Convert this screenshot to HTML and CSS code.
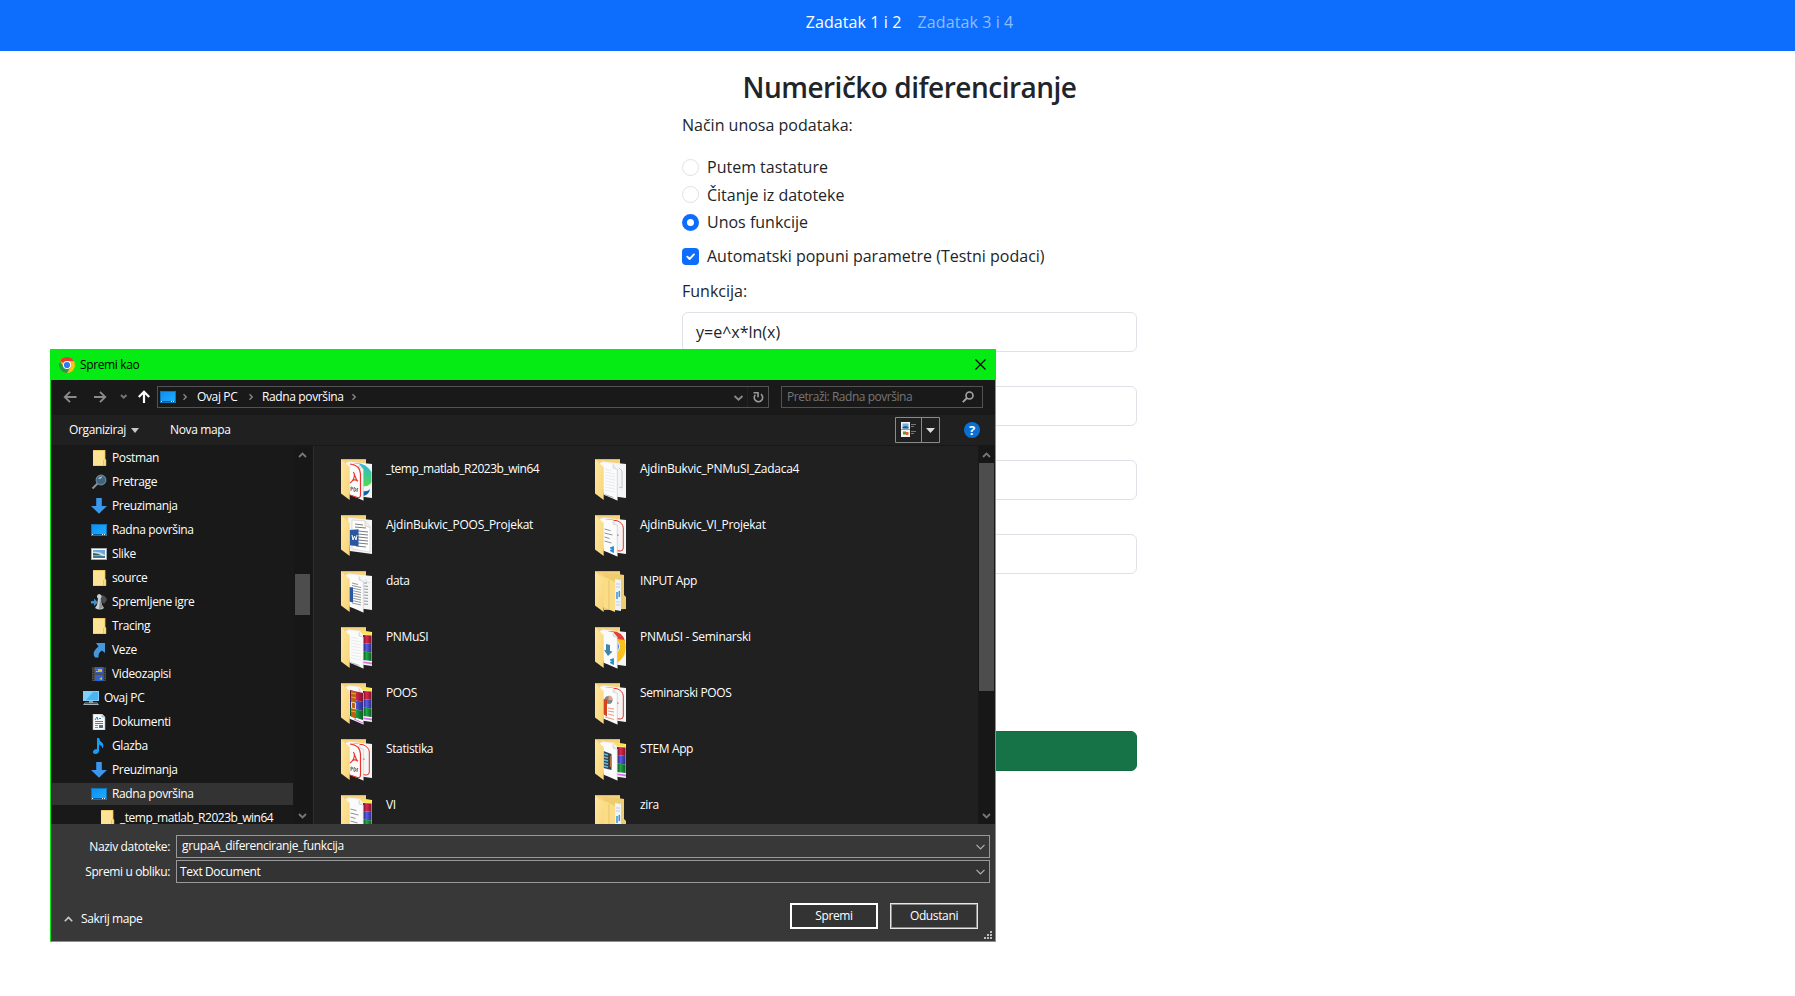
FILE: index.html
```html
<!DOCTYPE html>
<html lang="bs">
<head>
<meta charset="utf-8">
<title>Numeričko diferenciranje</title>
<link rel="stylesheet" href="styles.css">
</head>
<body>
<svg class="defs" width="0" height="0" aria-hidden="true">
  <defs>
    <linearGradient id="gFlap" x1="0" y1="0" x2="1" y2="1"><stop offset="0" stop-color="#ffe7a2"/><stop offset="1" stop-color="#f8d477"/></linearGradient>
    <linearGradient id="gDesk" x1="0" y1="0" x2="1" y2="1"><stop offset="0" stop-color="#0b8df5"/><stop offset="1" stop-color="#1fb0ff"/></linearGradient>
    <linearGradient id="gEdge" x1="0" y1="0" x2="0" y2="1"><stop offset="0" stop-color="#28b9d8"/><stop offset="1" stop-color="#55d84e"/></linearGradient>
    <linearGradient id="gRed"><stop offset="0" stop-color="#6d0d22"/><stop offset=".4" stop-color="#d42a52"/><stop offset="1" stop-color="#85122c"/></linearGradient>
    <linearGradient id="gBlue"><stop offset="0" stop-color="#20206c"/><stop offset=".4" stop-color="#5a5de0"/><stop offset="1" stop-color="#2a2a86"/></linearGradient>
    <linearGradient id="gGreen"><stop offset="0" stop-color="#064d1c"/><stop offset=".4" stop-color="#22a845"/><stop offset="1" stop-color="#0a5c24"/></linearGradient>
  </defs>
  <symbol id="folder" viewBox="0 0 16 16"><path d="M2 0h12v9l1 .6V16H2z" fill="#ffe394"/><path d="M2 .4h12M14 0v9l.8.8V15.700H2.400" fill="none" stroke="#e9bf4f" stroke-width=".8"/><path d="M12.600 15.500V10.500l1-1" fill="none" stroke="#e2b545" stroke-width=".8"/></symbol>
  <symbol id="lens" viewBox="0 0 16 16"><path d="M1.500 14.500 7 9" stroke="#8b959c" stroke-width="2"/><circle cx="10" cy="6" r="4.900" fill="#3e6681" stroke="#718897" stroke-width="1.100"/><path d="M7 5q1.500-3 4.500-2.500Q10 5.500 7 5z" fill="#a7c9de"/></symbol>
  <symbol id="down" viewBox="0 0 16 16"><path d="M5.200 0h5.600v8H16l-8 7.800L0 8h5.200z" fill="#3a97ec"/></symbol>
  <symbol id="desk" viewBox="0 0 16 16"><path d="M0 2h16v12H0z" fill="url(#gDesk)"/><path d="M.5 2.500h15v11H.5z" fill="none" stroke="#1274b8"/><path d="M1 12.500h14" stroke="#075a9c"/><path d="M1 12.500h1M11 12.500h1M13 12.500h1" stroke="#fff"/></symbol>
  <symbol id="pics" viewBox="0 0 16 16"><path d="M0 2h16v12H0z" fill="#a8a8a8"/><path d="M1 3h14v10H1z" fill="#fff"/><path d="M2 4h12v8H2z" fill="#6ba6dc"/><path d="M2 6q6-1 12 3v2H2z" fill="#c8e3ee"/><path d="M2 7q5 0 9 2.500H2z" fill="#2d6254"/><path d="M2 10h12v2H2z" fill="#48758e"/></symbol>
  <symbol id="games" viewBox="0 0 16 16"><path d="M9 1q6 0 7 5l-3 4-4-4z" fill="#4b4d51"/><path d="M8 0a2.500 2.500 0 0 1 1.500 4.500L11 11l2 3q-4 3-9 0l2-3 1-6.500A2.500 2.500 0 0 1 8 0z" fill="#cbd1d2"/><path d="M9 5l2 6 1 3-4 1z" fill="#8d9798"/><path d="M0 7h3V4.500L7 8.500 3 12V9.500H0z" fill="#3b91cc"/></symbol>
  <symbol id="link" viewBox="0 0 16 16"><path d="M5 1h9v10l-3-2.500q-4 2-3.500 7H4Q0 10 7.500 4.500z" fill="#4598dc"/></symbol>
  <symbol id="video" viewBox="0 0 16 16"><path d="M1 1h14v14H1z" fill="#4f4f4f"/><path d="M2.200 1v14M13.800 1v14" stroke="#151515" stroke-dasharray="1.200 1.200"/><path d="M4 1h8v6H4z" fill="#385cbb"/><path d="M4 9h8v6H4z" fill="#2c63cd"/><path d="M5 5h2V3h4v3H5zM8 13l3-2v3z" fill="#d8b72c"/><path d="M4 3h3v1H4z" fill="#af5a8a"/></symbol>
  <symbol id="pc" viewBox="0 0 16 16"><path d="M0 1h16v10H0z" fill="#83cdf6"/><path d="M1 2h14v8H1z" fill="#48b5f5"/><path d="M1 2h9L3 10H1z" fill="#81d0fb"/><path d="M6 11h4v2H6z" fill="#8a979e"/><path d="M2 12.500h12l2 2.500H0z" fill="#a6b4bc"/><path d="M2 13.500h12" stroke="#27343b" stroke-width=".7"/></symbol>
  <symbol id="doc" viewBox="0 0 16 16"><path d="M2 0h9l3 3v13H2z" fill="#fafafa" stroke="#aaa" stroke-width=".6"/><path d="M11 0v3h3" fill="#ddd" stroke="#999" stroke-width=".6"/><path d="M4 6l2-3 1 3M8 4.500h2M4 7.500h8M4 9.500h8" stroke="#2a87c8" fill="none"/><path d="M4 11.500h3M4 13.500h3" stroke="#888"/><path d="M8 11h4v3H8z" fill="#3f7592"/></symbol>
  <symbol id="note" viewBox="0 0 16 16"><path d="M6 0h2q.5 3 3 4.500 2.500 2.500.5 6-.3-3-3.500-4V13q-.5 3-3.500 3-3 0-2.500-2.700Q3 11 6 11z" fill="#10a0fa"/></symbol>

  <symbol id="back" viewBox="0 0 32 42"><path d="M0 0h25v30H0z" fill="#f6d27c"/><path d="M0 .5h25" stroke="#dfb65a"/></symbol>
  <symbol id="flap" viewBox="0 0 32 42"><path d="M0 .5 8.700 8v33L0 34.500z" fill="url(#gFlap)"/></symbol>
  <symbol id="page2" viewBox="0 0 32 42"><path d="M7 2.500 31 5v34L9 36z" fill="#f4f5f6"/></symbol>
  <symbol id="page1" viewBox="0 0 32 42"><path d="M5 3.500 18 5l4.300 5v31.500L8.500 35.500z" fill="#fbfbfb"/><path d="M22.300 10v31.500" stroke="#bfc3c5" stroke-width=".6"/><path d="M18 5v4l4.300 1.500" fill="#e6e6e6" stroke="#c6c6c6" stroke-width=".5"/></symbol>
  <symbol id="pdfBack" viewBox="0 0 32 42"><path d="M10 4.500l12 1.200Q28 8 28.300 13v20q0 3-3 3L15 35" fill="none" stroke="#e93328" stroke-width="1"/><path d="M22 19l2 1-2 1.500" fill="#e93328"/></symbol>
  <symbol id="pdfFront" viewBox="0 0 32 42"><path d="M9 5q10 1 10.500 10v21q0 3-3 2.500L9 36" fill="none" stroke="#e93328" stroke-width="1.200"/><path d="M12.500 13q2 6 4 9.500M13.500 15q0 6-4.500 9M11 21.500q3-1.500 6 .5" fill="none" stroke="#e93328" stroke-width="1.100"/><path d="M10 28v4M10 28q2 0 1.800 1.800H10M13 28.500v4q2 0 1.800-2-.2-2-1.800-2M16 33v-3.500h1.200M16 31h1" fill="none" stroke="#444" stroke-width=".7"/></symbol>
  <symbol id="lines1" viewBox="0 0 32 42"><path d="M11 12l6 1.500M11 14.500l9 2M11 17l9 2M11 19.500l9 2M11 22l9 2M11 24.500l9 2M11 27l9 2M11 29.500l9 2M11 32l9 2" stroke="#7c8084" stroke-width=".8"/></symbol>
  <symbol id="faint1" viewBox="0 0 32 42"><path d="M10 10l7 1.500M10 13l10 2M10 16l10 2M10 19l10 2M10 22l10 2M10 25l10 2M10 28l10 2M10 31l10 2" stroke="#e9ebed" stroke-width="1.200"/><path d="M9.500 35.500l9 3" stroke="#9a9a9a" stroke-width=".7"/></symbol>
  <symbol id="lines2" viewBox="0 0 32 42"><path d="M23 12h3M23 15l4 .4M23 18l4 .4M23 21l4 .4M23 24l4 .4M23 27l4 .4M23 30l4 .4M23 33l4 .4" stroke="#7c8084" stroke-width=".8"/><path d="M24 8l2 3 3 1" fill="none" stroke="#ccc" stroke-width=".6"/></symbol>
  <symbol id="rar2" viewBox="0 0 32 42"><path d="M18 3.500 30 5l1 3-9-.5z" fill="#ffe34d"/><path d="M22 8l8.600.5v8.500l-8.600-1z" fill="url(#gRed)"/><path d="M22 16l8.600 1v8.500l-8.600-1z" fill="url(#gBlue)"/><path d="M22 24.500l8.600 1V34L22 33z" fill="url(#gGreen)"/><path d="M22 34.500l9 1v2l-9-1.500z" fill="#e26bea"/></symbol>
  <symbol id="rar1" viewBox="0 0 32 42"><path d="M9 7l13 3v9L9 16z" fill="url(#gRed)"/><path d="M9 16l13 3v9L9 25z" fill="url(#gBlue)"/><path d="M9 25l13 3v9L9 33z" fill="url(#gGreen)"/><path d="M10 7.500l5 1.200v27L10 33.500z" fill="#b8630f"/><path d="M10 10l5 1M10 14l5 1M10 28l5 1" stroke="#f3a82b"/><path d="M10.500 19l4 1v6l-4-1z" fill="none" stroke="#f4d9aa" stroke-width="1"/><path d="M13 36l9 4" stroke="#e26bea"/></symbol>
  <symbol id="vs" viewBox="0 0 32 42"><path d="M18.500 31.500v6l-3.500-2 3-1.500-3-1z" fill="#1d87cf" stroke="#1d87cf" stroke-width=".8"/></symbol>
  <symbol id="few" viewBox="0 0 32 42"><path d="M9.500 14l6 1.700M9.500 18l8 2M9.500 22l5 1.500M9.500 26l7 2" stroke="#8e9296" stroke-width="1"/></symbol>
  <symbol id="inner" viewBox="0 0 32 42"><path d="M8.700 2 26 3.500 29 4v20l2 2v12l-22 1z" fill="#f0cc70"/><path d="M20 8l6 1v31l-6-1z" fill="#eef3f7"/><path d="M21 13h4M21 16h4M21 31h4M21 34h4" stroke="#b5c3cc" stroke-width=".8"/><path d="M22 21v7M24.300 20v6" stroke="#3a94d6" stroke-width="1.500"/><path d="M5 4l15 7v30L5 35z" fill="#fbdd87"/><path d="M14 9v29" stroke="#efcd79" stroke-width="1.600"/></symbol>
</svg>

<header class="topbar">
  <a class="active">Zadatak 1 i 2</a>
  <a>Zadatak 3 i 4</a>
</header>

<main class="form">
  <h1>Numeričko diferenciranje</h1>
  <p class="lead"><span>Način unosa podataka:</span></p>
  <div class="check"><i class="radio"></i><span>Putem tastature</span></div>
  <div class="check"><i class="radio"></i><span>Čitanje iz datoteke</span></div>
  <div class="check"><i class="radio on"></i><span>Unos funkcije</span></div>
  <div class="check auto"><svg class="box" viewBox="0 0 17 17"><rect width="17" height="17" rx="4" fill="#0d6efd"/><path d="M5.300 8.700l2.300 2.300 4.300-4.600" fill="none" stroke="#fff" stroke-width="1.900" stroke-linecap="round" stroke-linejoin="round"/></svg><span>Automatski popuni parametre (Testni podaci)</span></div>
  <label class="fn">Funkcija:</label>
  <div class="inputs">
    <div class="field">y=e^x*ln(x)</div>
    <div class="field"></div>
    <div class="field"></div>
    <div class="field"></div>
  </div>
  <div class="submit"></div>
</main>

<section class="dialog">
  <div class="title">
    <svg class="chrome" viewBox="0 0 16 16"><circle cx="8" cy="8" r="8" fill="#fbc116"/><path d="M8 8 1.070 4A8 8 0 0 1 14.930 4H8z" fill="#e33b2e"/><path d="M8 8 4.540 10 1.070 4A8 8 0 0 0 8 16l3.460-6z" fill="#249a4b"/><circle cx="8" cy="8" r="4" fill="#fff"/><circle cx="8" cy="8" r="3.100" fill="#2d7bf0"/></svg>
    <span>Spremi kao</span>
    <svg class="close" viewBox="0 0 11 11"><path d="M.5.5l10 10M10.500.5l-10 10" stroke="#000" stroke-width="1.100"/></svg>
  </div>
  <div class="navrow">
    <svg class="arrows" viewBox="0 0 100 20"><g fill="none" stroke="#8b8b8b" stroke-width="1.900"><path d="M13.500 10H2M7 4.800 1.800 10 7 15.200"/><path d="M31 10h11.500M37 4.800l5.200 5.200-5.200 5.200"/><path d="M58 8l2.700 2.700L63.500 8" stroke="#777"/><path d="M81 16V5M75.800 10 81 4.800 86.200 10" stroke="#fff" stroke-width="2.200"/></g></svg>
    <div class="address">
      <svg class="i16"><use href="#desk"/></svg>
      <svg class="sep" viewBox="0 0 6 8"><path d="M1.500 1.200 4.300 4 1.500 6.800" fill="none" stroke="#8a8a8a" stroke-width="1.300"/></svg>
      <span class="a1">Ovaj PC</span>
      <svg class="sep" viewBox="0 0 6 8"><path d="M1.500 1.200 4.300 4 1.500 6.800" fill="none" stroke="#8a8a8a" stroke-width="1.300"/></svg>
      <span class="a2">Radna površina</span>
      <svg class="sep" viewBox="0 0 6 8"><path d="M1.500 1.200 4.300 4 1.500 6.800" fill="none" stroke="#8a8a8a" stroke-width="1.300"/></svg>
      <svg class="addr-end" viewBox="0 0 36 20"><path d="M2.500 9l4 3.700L10.500 9" fill="none" stroke="#8a8a8a" stroke-width="1.800"/><path d="M15.500 0v20" stroke="#222"/><path d="M29 7.200A4.200 4.200 0 1 1 23.300 7.700M21.500 5.800h4.500v4.500" fill="none" stroke="#9a9a9a" stroke-width="1.600"/></svg>
    </div>
    <div class="search"><span>Pretraži: Radna površina</span><svg viewBox="0 0 12 12"><circle cx="7.500" cy="4.500" r="3.500" fill="none" stroke="#a5a5a5" stroke-width="1.600"/><path d="M5 7 .8 11.200" stroke="#a5a5a5" stroke-width="1.800"/></svg></div>
  </div>
  <div class="tools">
    <span class="org">Organiziraj</span><i class="tri"></i><span class="newf">Nova mapa</span>
    <svg class="view" viewBox="0 0 45 26"><path d="M.5.500h44v25H.5zM26.500 0v26" fill="none" stroke="#8a8a8a"/><path d="M6 5h9v15H6z" fill="#f4f4f4"/><path d="M7.500 6.500h6v5h-6z" fill="#71ade9"/><path d="M7.500 10l3-1 3 1v1.500h-6z" fill="#235f72"/><path d="M6 12.500h9" stroke="#999"/><path d="M8 14.500h3v3H8z" fill="#4f9c3c"/><path d="M11 15h2.500v3H11z" fill="#e0662a"/><path d="M16 7.500h5M16 9.500h3M16 14.500h5M16 16.500h3" stroke="#777"/><path d="M31 11h9l-4.500 5z" fill="#ddd"/></svg>
    <b class="help">?</b>
  </div>
  <div class="body">
    <nav class="tree">
      <div class="node"><svg class="i16"><use href="#folder"/></svg><span>Postman</span></div>
      <div class="node"><svg class="i16"><use href="#lens"/></svg><span>Pretrage</span></div>
      <div class="node"><svg class="i16"><use href="#down"/></svg><span>Preuzimanja</span></div>
      <div class="node"><svg class="i16"><use href="#desk"/></svg><span>Radna površina</span></div>
      <div class="node"><svg class="i16"><use href="#pics"/></svg><span>Slike</span></div>
      <div class="node"><svg class="i16"><use href="#folder"/></svg><span>source</span></div>
      <div class="node"><svg class="i16"><use href="#games"/></svg><span>Spremljene igre</span></div>
      <div class="node"><svg class="i16"><use href="#folder"/></svg><span>Tracing</span></div>
      <div class="node"><svg class="i16"><use href="#link"/></svg><span>Veze</span></div>
      <div class="node"><svg class="i16"><use href="#video"/></svg><span>Videozapisi</span></div>
      <div class="node up"><svg class="i16"><use href="#pc"/></svg><span>Ovaj PC</span></div>
      <div class="node"><svg class="i16"><use href="#doc"/></svg><span>Dokumenti</span></div>
      <div class="node"><svg class="i16"><use href="#note"/></svg><span>Glazba</span></div>
      <div class="node"><svg class="i16"><use href="#down"/></svg><span>Preuzimanja</span></div>
      <div class="node sel"><svg class="i16"><use href="#desk"/></svg><span>Radna površina</span></div>
      <div class="node deep"><svg class="i16"><use href="#folder"/></svg><span class="tight">_temp_matlab_R2023b_win64</span></div>
    </nav>
    <div class="scroll left">
      <svg viewBox="0 0 9 6"><path d="M1 5l3.500-3.500L8 5" fill="none" stroke="#777" stroke-width="1.800"/></svg>
      <i class="thumb"></i>
      <svg viewBox="0 0 9 6"><path d="M1 1l3.500 3.500L8 1" fill="none" stroke="#777" stroke-width="1.800"/></svg>
    </div>
    <div class="files">
      <div class="file"><svg class="big" viewBox="0 0 32 42"><use href="#back"/><use href="#page2"/><path d="M12 4.500q12-2 18.500 8.500v10q-2 5-9 4z" fill="url(#gEdge)"/><path d="M21 32q6 1 8-2-1 6-7 7z" fill="#1561a9"/><use href="#page1"/><use href="#pdfFront"/><use href="#flap"/></svg><span class="tight">_temp_matlab_R2023b_win64</span></div>
      <div class="file"><svg class="big" viewBox="0 0 32 42"><use href="#back"/><use href="#page2"/><path d="M11 5l13 1 5 6v25l-18-3z" fill="#fff" stroke="#c8c8c8" stroke-width=".6"/><path d="M24 6v5l5 1.500" fill="#eee" stroke="#d0c48c" stroke-width=".6"/><path d="M14 9l8 1M14 12l11 1M17 16l10 1M17 19l10 1M17 22l10 1M17 25l10 1M17 28l10 1M15 31l10 1" stroke="#666c72" stroke-width=".9"/><path d="M8.500 15l9-.8v17l-9-1z" fill="#2857a4"/><path d="M11 20l1 5 1.500-4 1.500 4 1-5" fill="none" stroke="#fff" stroke-width="1"/><use href="#flap"/></svg><span class="loose">AjdinBukvic_POOS_Projekat</span></div>
      <div class="file"><svg class="big" viewBox="0 0 32 42"><use href="#back"/><use href="#page2"/><use href="#lines2"/><use href="#page1"/><use href="#lines1"/><path d="M8 16l4 .5v15l-4-1z" fill="#2857a4"/><use href="#flap"/></svg><span>data</span></div>
      <div class="file"><svg class="big" viewBox="0 0 32 42"><use href="#back"/><use href="#page2"/><use href="#rar2"/><use href="#page1"/><use href="#faint1"/><use href="#flap"/></svg><span>PNMuSI</span></div>
      <div class="file"><svg class="big" viewBox="0 0 32 42"><use href="#back"/><use href="#page2"/><use href="#rar2"/><use href="#page1"/><use href="#rar1"/><use href="#flap"/></svg><span>POOS</span></div>
      <div class="file"><svg class="big" viewBox="0 0 32 42"><use href="#back"/><use href="#page2"/><use href="#pdfBack"/><use href="#page1"/><use href="#pdfFront"/><use href="#flap"/></svg><span>Statistika</span></div>
      <div class="file"><svg class="big" viewBox="0 0 32 42"><use href="#back"/><use href="#page2"/><use href="#rar2"/><use href="#page1"/><use href="#few"/><use href="#flap"/></svg><span>VI</span></div>

      <div class="file"><svg class="big" viewBox="0 0 32 42"><use href="#back"/><use href="#page2"/><path d="M24 9l3 3v17l-3-1" fill="none" stroke="#b9bdc0" stroke-width=".8"/><use href="#page1"/><use href="#faint1"/><use href="#flap"/></svg><span class="loose">AjdinBukvic_PNMuSI_Zadaca4</span></div>
      <div class="file"><svg class="big" viewBox="0 0 32 42"><use href="#back"/><use href="#page2"/><use href="#pdfBack"/><use href="#page1"/><use href="#few"/><use href="#vs"/><use href="#flap"/></svg><span class="loose">AjdinBukvic_VI_Projekat</span></div>
      <div class="file"><svg class="big" viewBox="0 0 32 42"><use href="#back"/><use href="#inner"/><use href="#flap"/></svg><span>INPUT App</span></div>
      <div class="file"><svg class="big" viewBox="0 0 32 42"><use href="#back"/><use href="#page2"/><path d="M13 4.500q14-2 17 9.500l-8 1z" fill="#e24033"/><path d="M22 12l7.500 1q4.500 15-7.500 23z" fill="#fbc21d"/><path d="M22 14q5 5.500 0 11z" fill="#3f80e8" stroke="#fff"/><use href="#page1"/><path d="M11 17l4 1v6l2.500.5L13 29l-4-6 2 .300z" fill="#3f86ad"/><use href="#vs"/><use href="#flap"/></svg><span class="loose">PNMuSI - Seminarski</span></div>
      <div class="file"><svg class="big" viewBox="0 0 32 42"><use href="#back"/><use href="#page2"/><use href="#pdfBack"/><use href="#page1"/><circle cx="13.500" cy="17" r="4" fill="#858585"/><path d="M13.500 17v-4.500a4 4 0 0 1 4 4.500z" fill="#eca184"/><path d="M8 16l4 .5v17L8 31z" fill="#d2431f"/><path d="M13 25l6 1M13 28l6 1M13 31l6 1.500M10 34l9 2.500" stroke="#e79b81" stroke-width="1"/><use href="#flap"/></svg><span>Seminarski POOS</span></div>
      <div class="file"><svg class="big" viewBox="0 0 32 42"><use href="#back"/><use href="#page2"/><use href="#rar2"/><use href="#page1"/><path d="M8.500 12l8 3v16l-8-2z" fill="#34434d"/><path d="M9 15l4 1M9 18l4 1M9 21l4 1M9 24l4 1M9 27l4 1" stroke="#6bb7d8" stroke-width="1.300"/><path d="M15 17l1.500.5v11L15 28z" fill="#b5763c"/><use href="#flap"/></svg><span>STEM App</span></div>
      <div class="file"><svg class="big" viewBox="0 0 32 42"><use href="#back"/><use href="#inner"/><use href="#flap"/></svg><span>zira</span></div>
    </div>
    <div class="scroll right">
      <svg viewBox="0 0 9 6"><path d="M1 5l3.500-3.500L8 5" fill="none" stroke="#777" stroke-width="1.800"/></svg>
      <i class="thumb"></i>
      <svg viewBox="0 0 9 6"><path d="M1 1l3.500 3.500L8 1" fill="none" stroke="#777" stroke-width="1.800"/></svg>
    </div>
  </div>
  <div class="foot">
    <div class="line"><label>Naziv datoteke:</label><div class="combo name"><span>grupaA_diferenciranje_funkcija</span><svg viewBox="0 0 9 6"><path d="M.5.800l4 4 4-4" fill="none" stroke="#b0b0b0" stroke-width="1.200"/></svg></div></div>
    <div class="line"><label>Spremi u obliku:</label><div class="combo type"><span>Text Document</span><svg viewBox="0 0 9 6"><path d="M.5.800l4 4 4-4" fill="none" stroke="#b0b0b0" stroke-width="1.200"/></svg></div></div>
    <div class="actions">
      <svg class="caret" viewBox="0 0 9 6"><path d="M.8 5.200 4.500 1.500 8.200 5.200" fill="none" stroke="#ccc" stroke-width="1.600"/></svg>
      <span class="hide">Sakrij mape</span>
      <div class="btn primary">Spremi</div>
      <div class="btn">Odustani</div>
    </div>
    <svg class="grip" viewBox="0 0 8 8"><path d="M6 0h2v2H6zM3 3h2v2H3zM6 3h2v2H6zM0 6h2v2H0zM3 6h2v2H3zM6 6h2v2H6z" fill="#bdbdbd"/></svg>
  </div>
</section>
</body>
</html>
```
FILE: styles.css
```css
* { box-sizing: border-box; }
body {
  margin: 0;
  height: 996px;
  overflow: hidden;
  position: relative;
  background: #fff;
  color: #212529;
  font: 400 16px/24px "Open Sans", "Noto Sans", sans-serif;
  letter-spacing: 0;
}
svg { display: block; flex: none; }
span, label, a { white-space: nowrap; }
.defs { position: absolute; }

.topbar {
  height: 51px;
  background: #0d6efd;
  display: flex;
  justify-content: center;
  gap: 16px;
  padding: 10px 0 0 24px;
  color: #fff;
  letter-spacing: 0.1px;
}
.topbar a:not(.active) { color: #8fbcff; }

.form { width: 455px; margin-left: 682px; }
h1 {
  margin: 19px 0 0;
  font-size: 28px;
  line-height: 34px;
  font-weight: 600;
  text-align: center;
  letter-spacing: -0.5px;
}
.lead { margin: 9px 0 18px; }
.check { display: flex; align-items: center; gap: 8px; height: 24px; margin-bottom: 3.500px; }
.radio { width: 17px; height: 17px; border: 1px solid #dee2e6; border-radius: 50%; }
.radio.on { border: 5px solid #0d6efd; }
.auto { margin-top: 10px; }
.box { width: 17px; height: 17px; }
.fn { display: block; margin-top: 11px; }
.inputs { display: flex; flex-direction: column; gap: 34px; margin-top: 9px; }
.field { height: 40px; border: 1px solid #dee2e6; border-radius: 6px; padding: 7px 13px; }
.submit { height: 40px; margin-top: 157px; background: #157347; border: 1px solid #146c43; border-radius: 6px; }

.dialog {
  position: absolute;
  left: 50px;
  top: 349px;
  width: 946px;
  height: 593px;
  border: 1px solid #04ec14;
  background: #202020;
  color: #fff;
  font-size: 12px;
  line-height: 16px;
  letter-spacing: -0.37px;
  display: flex;
  flex-direction: column;
}
.title { height: 30px; background: #04ec14; color: #000; display: flex; align-items: center; padding: 0 9px 1px 8px; gap: 5px; }
.title span { padding-top: 1px; }
.chrome { width: 16px; height: 16px; }
.close { width: 11px; height: 11px; margin-left: auto; }
.navrow { height: 35px; background: #191919; display: flex; align-items: center; padding: 0 12px 1px 0; }
.arrows { width: 100px; height: 20px; margin: 0 -6px 0 12px; }
.address { width: 612px; height: 22px; border: 1px solid #535353; display: flex; align-items: center; padding: 0 0 0 2px; }
.i16 { width: 16px; height: 16px; }
.sep { width: 6px; height: 8px; margin-left: 5px; }
.address .i16 + .sep { margin-left: 6px; }
.a1 { width: 42px; margin-left: 9px; }
.a2 { width: 81px; margin-left: 8px; }
.a1 + .sep { margin-left: 9px; }
.a2 + .sep { margin-left: 8px; }
.addr-end { width: 36px; height: 20px; margin-left: auto; }
.search { width: 202px; height: 22px; margin-left: 12px; border: 1px solid #535353; color: #767676; display: flex; align-items: center; justify-content: space-between; padding: 0 8px 0 5px; letter-spacing: -0.47px; }
.search svg { width: 12px; height: 12px; }
.tools { height: 31px; border-bottom: 1px solid #181818; display: flex; align-items: center; padding: 0 15px 0 18px; }
.org { width: 57px; }
.tri { border: 4px solid transparent; border-top: 5px solid #c8c8c8; border-bottom: 0; margin: 0 0 0 5px; }
.newf { margin-left: 31px; }
.view { width: 45px; height: 26px; margin-left: auto; }
.help { width: 16px; height: 16px; margin-left: 24px; border-radius: 50%; background: #0a6fd0; text-align: center; font-size: 13px; line-height: 16px; letter-spacing: 0; }

.body { height: 378px; display: flex; overflow: hidden; }
.tree { width: 243px; background: #191919; padding-left: 1px; overflow: hidden; }
.node { height: 22px; margin: 1px 0 2px; width: 241px; display: flex; align-items: center; gap: 5px; padding-left: 39px; }
.node.up { padding-left: 31px; gap: 5px; }
.node.deep { padding-left: 47px; }
.sel { background: #333; }
.tight { letter-spacing: -0.48px; }
.loose { letter-spacing: -0.27px; }
.scroll { background: #171717; display: flex; flex-direction: column; align-items: center; justify-content: space-between; position: relative; padding: 6px 0 5px; }
.scroll svg { width: 9px; height: 6px; }
.thumb { position: absolute; background: #4d4d4d; }
.left { width: 19px; border-right: 1px solid #191919; padding-right: 2px; }
.left .thumb { left: 1px; top: 128px; width: 15px; height: 41px; }
.right { width: 17px; }
.right .thumb { left: 1px; top: 17px; width: 15px; height: 228px; }
.files { width: 665px; border-left: 1px solid #2c2c2c; padding: 13px 0 0 27px; display: grid; grid-template-rows: repeat(7, 56px); grid-auto-flow: column; grid-auto-columns: 254px; }
.file { display: flex; gap: 13px; height: 56px; }
.file span { padding-top: 2px; }
.big { width: 32px; height: 42px; }

.foot { height: 117px; background: #383838; padding: 11px 5px 0 0; position: relative; }
.line { display: flex; align-items: center; gap: 6px; height: 23px; margin-bottom: 2px; }
.line label { width: 119px; text-align: right; }
.combo { width: 814px; height: 23px; border: 1px solid #999; display: flex; align-items: center; justify-content: space-between; padding: 0 4px 1px 5px; letter-spacing: -0.34px; }
.combo svg { width: 9px; height: 6px; margin-top: 1px; }
.type { background: #333; padding: 0 4px 0 3px; letter-spacing: -0.4px; }
.combo.type svg { margin-top: 0; }
.actions { display: flex; height: 26px; margin-top: 20px; padding: 0 12px 0 13px; }
.caret { width: 9px; height: 6px; margin: 13px 8px 0 0; }
.hide { padding-top: 8px; }
.btn { width: 88px; height: 26px; border: 2px solid #e8e8e8; background: #333; outline: 1px solid #8a8a8a; outline-offset: -2px; text-align: center; line-height: 22px; margin-left: 12px; }
.btn.primary { border-color: #fff; outline: 0; margin-left: auto; }
.grip { position: absolute; right: 3px; bottom: 2px; width: 8px; height: 8px; }
```
